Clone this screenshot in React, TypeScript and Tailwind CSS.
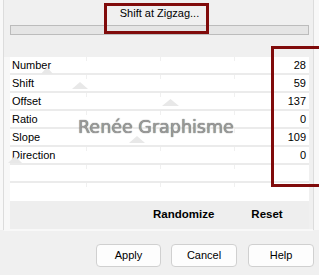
import React from "react";

const rows = [
  { label: "Number", value: "28" },
  { label: "Shift", value: "59" },
  { label: "Offset", value: "137" },
  { label: "Ratio", value: "0" },
  { label: "Slope", value: "109" },
  { label: "Direction", value: "0" },
  { label: "", value: "" },
  { label: "", value: "" },
];

// faint watermark triangles, in page coordinates
const triangles = [
  [72, 82, 16],
  [41, 67, 12],
  [162, 99, 17],
  [129, 136, 16],
  [8, 156, 14],
];

export default function App() {
  return (
    <div className="relative w-[319px] h-[275px] overflow-hidden bg-[#f0f0f0] font-['Liberation_Sans',Arial,sans-serif] text-black">
      <div className="flex h-[230px]">
        <div className="w-[3px] bg-[#f8f8f8]" />
        <div className="w-[1px] bg-[#dcdcdc]" />

        <div className="flex w-[309px] flex-col">
          <div className="flex flex-1 flex-col">
            {/* header */}
            <div className="flex h-[57px] flex-col pl-[6px] pr-[4px]">
              <div className="mt-[6px] h-[14px] text-center text-[11px] leading-[14px]">Shift at Zigzag...</div>
              <div className="mt-[5px] h-[10px] border border-[#bcbcbc] bg-[#e5e5e5]" />
            </div>

            {/* list */}
            <div className="flex">
              <div className="w-[6px] bg-[#f8f8f8]" />
              <div className="flex-1">
                {rows.map((r, i) => (
                  <div
                    key={i}
                    className={`relative flex h-[18px] items-start justify-between bg-white ${
                      i < rows.length - 1 ? "border-b-2 border-[#ebebeb]" : "h-[16px]"
                    }`}
                  >
                    <span className="pl-[2px] text-[11px] leading-[16px]">{r.label}</span>
                    <span className="pr-[3px] text-[11px] leading-[16px]">{r.value}</span>
                    <span className="absolute left-[76px] top-0 h-[4px] w-[1px] bg-[#f0f0f0]" />
                    <span className="absolute left-[150px] top-0 h-[4px] w-[1px] bg-[#f0f0f0]" />
                    <span className="absolute left-[224px] top-0 h-[4px] w-[1px] bg-[#f0f0f0]" />
                  </div>
                ))}
              </div>
              <div className="w-[4px]" />
            </div>

            {/* footer */}
            <div className="flex h-[28px]">
              <div className="w-[6px] bg-[#f8f8f8]" />
              <div className="flex flex-1 items-center gap-[37px] bg-[#eeeeee] pl-[143px] text-[11.5px] font-bold">
                <span>Randomize</span>
                <span>Reset</span>
              </div>
              <div className="w-[4px]" />
            </div>
            <div className="h-[2px] bg-[#f8f8f8]" />
          </div>
          <div className="h-[1px] bg-[#dcdcdc]" />
        </div>

        <div className="w-[1px] bg-[#dcdcdc]" />
        <div className="flex-1 bg-[#f8f8f8]" />
      </div>

      {/* buttons */}
      <div className="mt-[14px] flex justify-end pr-[5px] text-[11px]">
        <button className="h-[23px] w-[65px] rounded-[4px] border border-[#d0d0d0] bg-[#fdfdfd]">Apply</button>
        <button className="ml-[10px] h-[23px] w-[66px] rounded-[4px] border border-[#d0d0d0] bg-[#fdfdfd]">Cancel</button>
        <button className="ml-[11px] h-[23px] w-[66px] rounded-[4px] border border-[#d0d0d0] bg-[#fdfdfd]">Help</button>
      </div>

      {/* watermark */}
      <svg className="pointer-events-none absolute left-0 top-0" width="319" height="275">
        {triangles.map(([x, y, w], i) => (
          <polygon key={i} points={`${x + w / 2},${y} ${x + w},${y + 7} ${x},${y + 7}`} fill="#e8e8e8" />
        ))}
      </svg>
      <div
        className="pointer-events-none absolute left-[78px] top-[116px] text-[17.5px] leading-[22px] text-[#9a9a9a] font-['DejaVu_Sans',sans-serif]"
        style={{ textShadow: "0 0 1px #444, 1px 1px 0 #fff" }}
      >
        Renée Graphisme
      </div>

      {/* annotation boxes */}
      <div className="pointer-events-none absolute left-[104px] top-[3px] h-[31px] w-[105px] border-[3px] border-[#800b0b]" />
      <div className="pointer-events-none absolute left-[271px] top-[46px] h-[141px] w-[60px] border-[3px] border-[#800b0b]" />
    </div>
  );
}
